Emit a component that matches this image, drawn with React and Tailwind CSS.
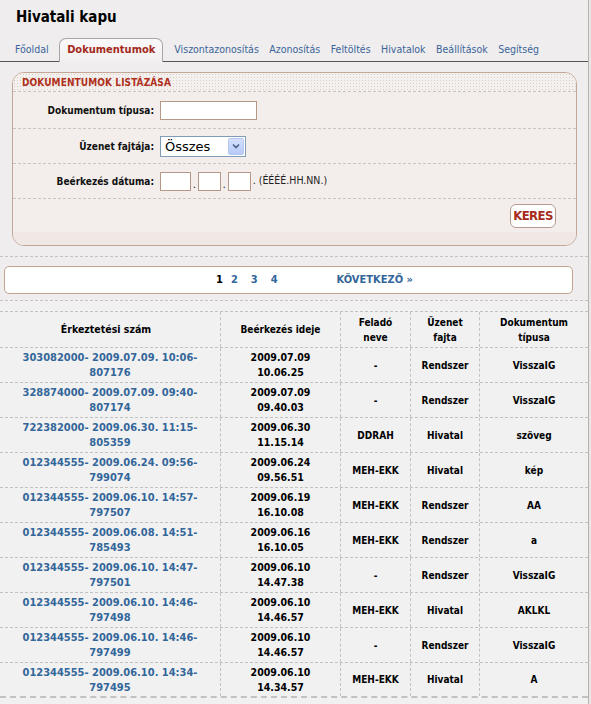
import React from "react";

const tabs = [
  { label: "Főoldal" },
  { label: "Dokumentumok", active: true },
  { label: "Viszontazonosítás" },
  { label: "Azonosítás" },
  { label: "Feltöltés" },
  { label: "Hivatalok" },
  { label: "Beállítások" },
  { label: "Segítség" },
];

const rows = [
  ["303082000- 2009.07.09. 10:06-", "807176", "2009.07.09", "10.06.25", "-", "Rendszer", "VisszaIG"],
  ["328874000- 2009.07.09. 09:40-", "807174", "2009.07.09", "09.40.03", "-", "Rendszer", "VisszaIG"],
  ["722382000- 2009.06.30. 11:15-", "805359", "2009.06.30", "11.15.14", "DDRAH", "Hivatal", "szöveg"],
  ["012344555- 2009.06.24. 09:56-", "799074", "2009.06.24", "09.56.51", "MEH-EKK", "Hivatal", "kép"],
  ["012344555- 2009.06.10. 14:57-", "797507", "2009.06.19", "16.10.08", "MEH-EKK", "Rendszer", "AA"],
  ["012344555- 2009.06.08. 14:51-", "785493", "2009.06.16", "16.10.05", "MEH-EKK", "Rendszer", "a"],
  ["012344555- 2009.06.10. 14:47-", "797501", "2009.06.10", "14.47.38", "-", "Rendszer", "VisszaIG"],
  ["012344555- 2009.06.10. 14:46-", "797498", "2009.06.10", "14.46.57", "MEH-EKK", "Hivatal", "AKLKL"],
  ["012344555- 2009.06.10. 14:46-", "797499", "2009.06.10", "14.46.57", "-", "Rendszer", "VisszaIG"],
  ["012344555- 2009.06.10. 14:34-", "797495", "2009.06.10", "14.34.57", "MEH-EKK", "Hivatal", "A"],
];

const cell =
  "flex flex-col items-center justify-center text-center border-r border-dashed border-[#c2c2c2] leading-[15px]";

const FormRow = ({ label, children, h }) => (
  <div className={`flex items-center border-b border-dashed border-[#cbc4c0] ${h}`}>
    <div className="w-[147px] text-right font-bold text-[10px] text-[#111] pr-[6px]">{label}</div>
    <div className="flex items-center">{children}</div>
  </div>
);

export default function App() {
  return (
    <div className="flex w-[591px] h-[704px] overflow-hidden bg-[#e9e6e6] font-['DejaVu_Sans_Condensed','Liberation_Sans',sans-serif]">
      <div className="w-[589px] h-full border-r border-[#b9afaf] bg-[#efeded] flex flex-col">
        {/* title */}
        <div className="h-[38px] pl-[16px] pt-[7px]">
          <h1 className="text-[15px] leading-[20px] font-bold text-black">Hivatali kapu</h1>
        </div>

        {/* tabs */}
        <div className="h-[24px] flex items-stretch border-b border-[#555] pl-[15px] text-[10.5px]">
          {tabs.map((t) =>
            t.active ? (
              <div
                key={t.label}
                className="mr-[11px] mb-[-1px] px-[7px] flex items-center rounded-t-[7px] border border-b-0 border-[#a9a5a5] bg-gradient-to-b from-[#fbfafa] to-[#f1efef] font-bold text-[11px] text-[#a3291b]"
              >
                {t.label}
              </div>
            ) : (
              <div key={t.label} className="flex items-center mr-[10.5px] text-[#3b659a]">
                {t.label}
              </div>
            )
          )}
        </div>

        {/* search panel */}
        <div className="mt-[10px] ml-[12px] w-[565px] h-[174px] rounded-[12px] border border-[#c2a797] bg-[#f3eeeb] overflow-hidden flex flex-col">
          <div className="h-[19px] flex items-center pl-[9px] border-b border-dashed border-[#cbc2be] bg-[#f4f0ee] bg-[radial-gradient(circle,#d8cfcb_0.7px,transparent_0.9px)] bg-[length:3px_3px]">
            <span className="text-[10px] font-bold text-[#b0301c] tracking-[0.1px]">DOKUMENTUMOK LISTÁZÁSA</span>
          </div>

          <FormRow label="Dokumentum típusa:" h="h-[37px]">
            <div className="w-[97px] h-[19px] border border-[#b69888] bg-white" />
          </FormRow>

          <FormRow label="Üzenet fajtája:" h="h-[35px]">
            <div className="w-[86px] h-[21px] border border-[#7f9db9] bg-white flex items-center justify-between">
              <span className="pl-[4px] text-[13px] leading-none text-black font-['DejaVu_Sans',sans-serif]">Összes</span>
              <div className="w-[16px] h-[17px] mr-[1px] rounded-[2px] border border-[#b7c8f0] bg-gradient-to-b from-[#d4e0fd] to-[#b7cbf8] flex items-center justify-center">
                <svg width="8" height="6" viewBox="0 0 8 6">
                  <path d="M1 1.5 L4 4.5 L7 1.5" fill="none" stroke="#4d6185" strokeWidth="1.6" />
                </svg>
              </div>
            </div>
          </FormRow>

          <FormRow label="Beérkezés dátuma:" h="h-[35px]">
            <div className="w-[31px] h-[19px] border border-[#b69888] bg-white" />
            <span className="text-[10px] px-[2px] leading-none pt-[8px]">.</span>
            <div className="w-[23px] h-[19px] border border-[#b69888] bg-white" />
            <span className="text-[10px] px-[2px] leading-none pt-[8px]">.</span>
            <div className="w-[23px] h-[19px] border border-[#b69888] bg-white" />
            <span className="text-[10.5px] pl-[2px] text-[#222]">. (ÉÉÉÉ.HH.NN.)</span>
          </FormRow>

          <div className="h-[33px] flex items-center justify-end pr-[20px]">
            <div className="w-[46px] h-[24px] rounded-[6px] border border-[#b99a8a] bg-white flex items-center justify-center">
              <span className="text-[13px] font-bold text-[#a62b1c] tracking-[-0.6px]">KERES</span>
            </div>
          </div>
          <div className="flex-1 bg-[#efe8e4]" />
        </div>

        {/* pagination */}
        <div className="mt-[10px] border-t border-dashed border-[#c6c2c2]" />
        <div className="mt-[9px] ml-[4px] w-[569px] h-[28px] rounded-[5px] border border-[#c2a38f] bg-white flex items-center pl-[211px] text-[11px] font-bold">
          <span className="text-black">1</span>
          <span className="ml-[8px] text-[#336699]">2</span>
          <span className="ml-[13px] text-[#336699]">3</span>
          <span className="ml-[13px] text-[#336699]">4</span>
          <span className="ml-[59px] text-[#336699]">KÖVETKEZŐ »</span>
        </div>

        {/* table */}
        <div className="mt-[6px] flex-1 bg-[#f1f1f2] border-t border-dashed border-[#c6c2c2] pt-[10px]">
          <div className="grid grid-cols-[221px_120px_70px_69px_108px] h-[37px] border-y border-dashed border-[#c2c2c2] text-[10px] font-bold text-black">
            <div className={`${cell} pr-[8px] text-[10.5px]`}>Érkeztetési szám</div>
            <div className={cell}>Beérkezés ideje</div>
            <div className={cell}>
              <span>Feladó</span>
              <span>neve</span>
            </div>
            <div className={cell}>
              <span>Üzenet</span>
              <span>fajta</span>
            </div>
            <div className={`${cell} border-r-0`}>
              <span>Dokumentum</span>
              <span>típusa</span>
            </div>
          </div>
          {rows.map((r, i) => (
            <div
              key={i}
              className={`grid grid-cols-[221px_120px_70px_69px_108px] h-[35px] border-dashed border-[#c2c2c2] text-[10px] font-bold text-black ${
                i === rows.length - 1 ? "border-b-2" : "border-b"
              }`}
            >
              <div className="flex flex-col justify-center border-r border-dashed border-[#c2c2c2] leading-[15px] text-[11px] text-[#336699]">
                <div className="flex justify-center">
                  <span>{r[0]}</span>
                </div>
                <div className="flex justify-center">
                  <span>{r[1]}</span>
                </div>
              </div>
              <div className={`${cell} text-[10.5px]`}>
                <span>{r[2]}</span>
                <span>{r[3]}</span>
              </div>
              <div className={cell}>{r[4]}</div>
              <div className={cell}>{r[5]}</div>
              <div className={`${cell} border-r-0`}>{r[6]}</div>
            </div>
          ))}
        </div>
      </div>
    </div>
  );
}
